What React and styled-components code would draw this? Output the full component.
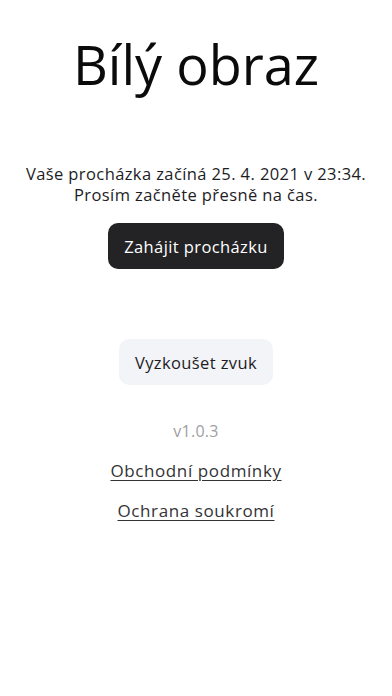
import React from "react";
import styled, { createGlobalStyle } from "styled-components";

const GlobalStyle = createGlobalStyle`
  html, body {
    margin: 0;
    padding: 0;
    background: #ffffff;
  }
  body {
    font-family: "Open Sans", "Liberation Sans", sans-serif;
    color: #1d1d1f;
  }
`;

const Page = styled.main`
  display: flex;
  flex-direction: column;
  align-items: center;
  width: 392px;
  min-height: 696px;
  box-sizing: border-box;
  padding-top: 30px;
`;

const Title = styled.h1`
  margin: 0;
  font-weight: 400;
  font-size: 54px;
  line-height: 68px;
  color: #0b0b0b;
`;

const Intro = styled.p`
  margin: 65px 0 0;
  font-size: 16.5px;
  line-height: 21px;
  letter-spacing: 0.4px;
  text-align: center;
  color: #1d1d1f;
`;

const Button = styled.button`
  border: none;
  border-radius: 10px;
  height: 46px;
  padding: 0 16px;
  font-family: inherit;
  font-size: 16.5px;
  letter-spacing: 0.4px;
  cursor: pointer;
  background: ${(p) => (p.$primary ? "#232326" : "#f3f4f8")};
  color: ${(p) => (p.$primary ? "#ffffff" : "#1d1d1f")};
  margin-top: ${(p) => p.$top}px;
`;

const Version = styled.div`
  margin-top: 36px;
  font-size: 16px;
  line-height: 20px;
  letter-spacing: 0.3px;
  color: #a0a0a3;
`;

const Link = styled.a`
  margin-top: 20px;
  font-size: 17px;
  line-height: 20px;
  letter-spacing: 0.6px;
  color: #333336;
  text-decoration: underline;
  text-underline-offset: 3px;
`;

export default function App() {
  return (
    <>
      <GlobalStyle />
      <Page>
        <Title>Bílý obraz</Title>
        <Intro>
          Vaše procházka začíná 25. 4. 2021 v 23:34.
          <br />
          Prosím začněte přesně na čas.
        </Intro>
        <Button $primary $top={18}>Zahájit procházku</Button>
        <Button $top={70}>Vyzkoušet zvuk</Button>
        <Version>v1.0.3</Version>
        <Link href="#">Obchodní podmínky</Link>
        <Link href="#">Ochrana soukromí</Link>
      </Page>
    </>
  );
}
